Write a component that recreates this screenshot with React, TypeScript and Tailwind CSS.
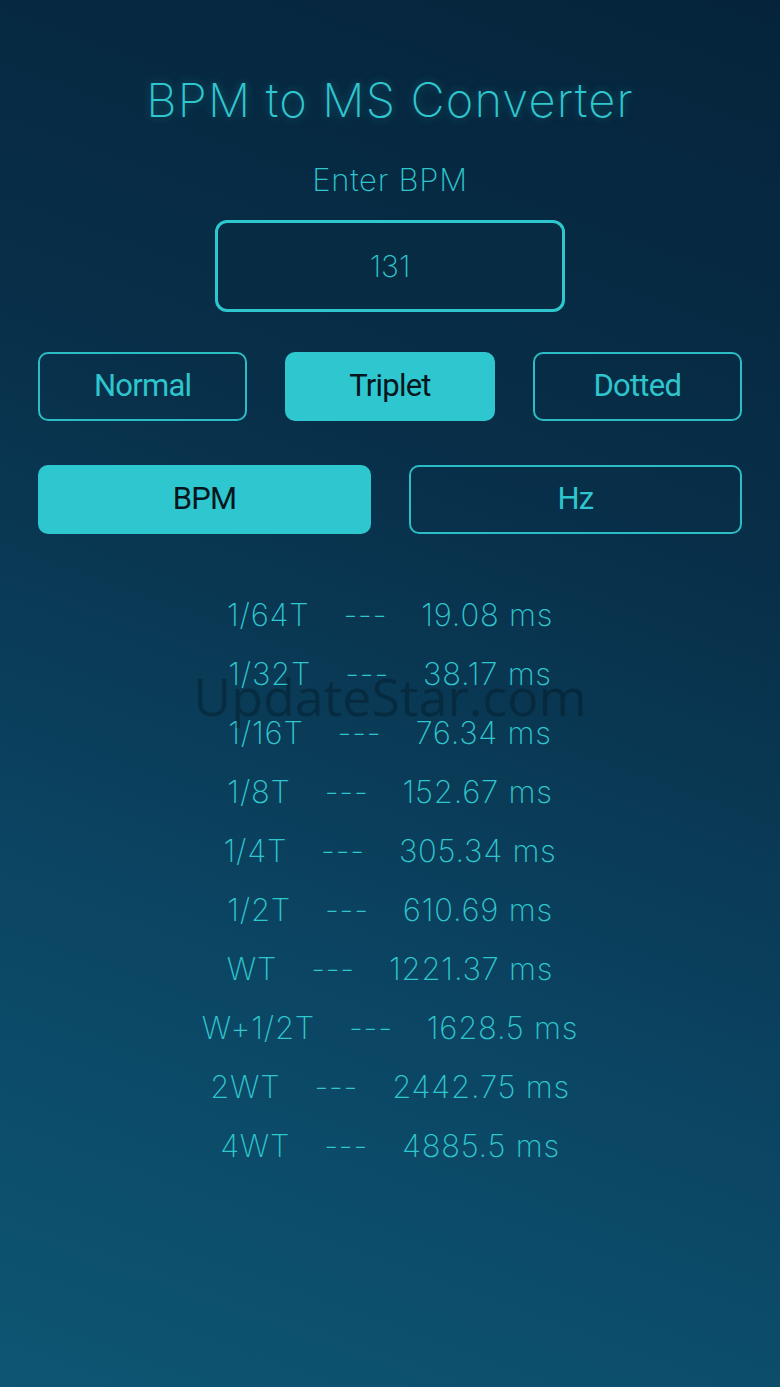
import { useState } from 'react'

type Mode = 'normal' | 'triplet' | 'dotted'
type Unit = 'bpm' | 'hz'

const rows: [string, string][] = [
  ['1/64T', '19.08 ms'],
  ['1/32T', '38.17 ms'],
  ['1/16T', '76.34 ms'],
  ['1/8T', '152.67 ms'],
  ['1/4T', '305.34 ms'],
  ['1/2T', '610.69 ms'],
  ['WT', '1221.37 ms'],
  ['W+1/2T', '1628.5 ms'],
  ['2WT', '2442.75 ms'],
  ['4WT', '4885.5 ms'],
]

const thin = { fontFamily: 'Inter, Lato, "Noto Sans", sans-serif' }
const btnFont = { fontFamily: 'Roboto, "Liberation Sans", sans-serif' }

function Toggle({ label, active, onClick }: { label: string; active: boolean; onClick: () => void }) {
  return (
    <button
      onClick={onClick}
      style={btnFont}
      className={
        active
          ? 'flex-1 h-[69px] rounded-[10px] border-2 border-[#2ec7cf] bg-[#2ec7cf] text-[31px] tracking-tight text-[#07161d]'
          : 'flex-1 h-[69px] rounded-[10px] border-2 border-[#2bbcc4] bg-transparent text-[31px] tracking-tight text-[#2ec5cc]'
      }
    >
      {label}
    </button>
  )
}

export default function App() {
  const [mode, setMode] = useState<Mode>('triplet')
  const [unit, setUnit] = useState<Unit>('bpm')

  return (
    <div className="relative min-h-[1387px] w-full overflow-hidden bg-[linear-gradient(200deg,#05243b_0%,#082f49_35%,#0b4664_70%,#0d5673_100%)] px-[38px] pt-[70px]">
      <h1
        style={thin}
        className="text-center text-[47px] leading-[60px] font-extralight tracking-wide text-[#2fc6cd] [text-shadow:0_0_10px_rgba(46,199,207,0.35)]"
      >
        BPM to MS Converter
      </h1>

      <p style={thin} className="mt-[30px] text-center text-[31px] leading-[40px] font-extralight tracking-wide text-[#2fc6cd]">
        Enter BPM
      </p>

      <div className="mt-[20px] flex justify-center">
        <div className="flex h-[92px] w-[350px] items-center justify-center rounded-[12px] border-[3px] border-[#2ec7cf] bg-[#072b43]">
          <span style={thin} className="text-[30px] font-extralight text-[#2fc6cd]">131</span>
        </div>
      </div>

      <div className="mt-[40px] flex gap-[38px]">
        <Toggle label="Normal" active={mode === 'normal'} onClick={() => setMode('normal')} />
        <Toggle label="Triplet" active={mode === 'triplet'} onClick={() => setMode('triplet')} />
        <Toggle label="Dotted" active={mode === 'dotted'} onClick={() => setMode('dotted')} />
      </div>

      <div className="mt-[44px] flex gap-[38px]">
        <Toggle label="BPM" active={unit === 'bpm'} onClick={() => setUnit('bpm')} />
        <Toggle label="Hz" active={unit === 'hz'} onClick={() => setUnit('hz')} />
      </div>

      <div className="mt-[52px] flex flex-col">
        {rows.map(([note, ms]) => (
          <div
            key={note}
            style={thin}
            className="flex h-[59px] items-center justify-center gap-[34px] text-[31px] font-extralight tracking-wide text-[#2fc6cd]"
          >
            <span>{note}</span>
            <span>---</span>
            <span>{ms}</span>
          </div>
        ))}
      </div>

      <div
        style={{ fontFamily: '"Open Sans", "Noto Sans", sans-serif' }}
        className="pointer-events-none absolute left-0 right-0 top-[664px] text-center text-[52px] leading-[64px] text-black/25"
      >
        UpdateStar.com
      </div>
    </div>
  )
}
